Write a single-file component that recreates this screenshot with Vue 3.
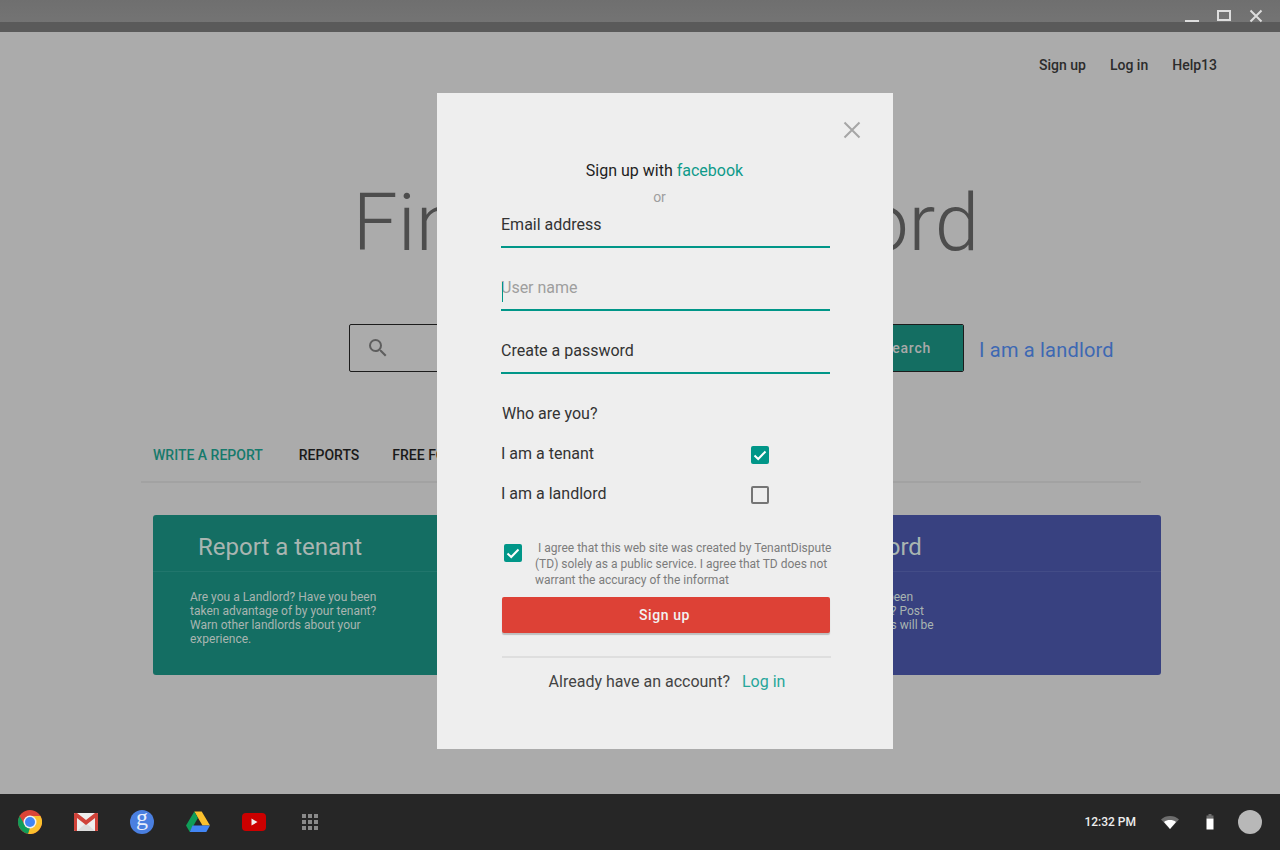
<script setup>
const shelfApps = ['chrome', 'gmail', 'google', 'drive', 'youtube', 'launcher']
const dots = [0, 1, 2].flatMap(y => [0, 1, 2].map(x => ({ x: 4 + x * 6, y: 4 + y * 6 })))
</script>

<template>
  <div class="screen">
    <div class="titlebar">
      <div class="window-controls">
        <svg width="16" height="16" viewBox="0 0 16 16"><rect x="1" y="12" width="14" height="2" fill="#ddd" /></svg>
        <svg width="16" height="16" viewBox="0 0 16 16"><rect x="2" y="3" width="12" height="9" fill="none" stroke="#ddd" stroke-width="2" /></svg>
        <svg width="16" height="16" viewBox="0 0 16 16"><path d="M2.500 2.500l11 11M13.500 2.500l-11 11" stroke="#ddd" stroke-width="2" /></svg>
      </div>
    </div>

    <main class="page">
      <nav class="top-nav">
        <a>Sign up</a>
        <a>Log in</a>
        <a>Help13</a>
      </nav>

      <h1 class="headline">Find your landlord</h1>

      <div class="search-row">
        <div class="search-box">
          <svg width="24" height="24" viewBox="0 0 24 24" fill="#5e5e5e">
            <path d="M15.500 14h-.79l-.28-.27A6.470 6.470 0 0 0 16 9.500 6.500 6.500 0 1 0 9.500 16c1.610 0 3.090-.59 4.230-1.570l.27.28v.79l5 4.990L20.490 19l-4.990-5zm-6 0C7.010 14 5 11.990 5 9.500S7.010 5 9.500 5 14 7.010 14 9.500 11.990 14 9.500 14z" />
          </svg>
          <button class="search-button">Search</button>
        </div>
        <a class="landlord-link">I am a landlord</a>
      </div>

      <div class="tabs">
        <a class="active">WRITE A REPORT</a>
        <a>REPORTS</a>
        <a>FREE FORMS</a>
      </div>

      <div class="cards">
        <section class="card card-tenant">
          <h2>Report a tenant</h2>
          <p>Are you a Landlord? Have you been taken advantage of by your tenant? Warn other landlords about your experience.</p>
        </section>
        <section class="card card-landlord">
          <h2>Report a landlord</h2>
          <p>Are you a Resident? Have you been<br />taken advantage of by landlord? Post<br />your story here. Your comments will be<br />public.</p>
        </section>
      </div>
    </main>

    <footer class="shelf">
      <div class="shelf-apps">
        <template v-for="app in shelfApps" :key="app">
          <svg v-if="app === 'chrome'" width="24" height="24" viewBox="0 0 24 24">
            <circle cx="12" cy="12" r="12" fill="#db4437" />
            <path d="M12 6h10.400A12 12 0 0 1 10 23.800L12 12z" fill="#fbc02d" />
            <path d="M1.600 6l5.200 9L12 18l-2 5.800A12 12 0 0 1 1.600 6z" fill="#0f9d58" />
            <circle cx="12" cy="12" r="6.500" fill="#f1f1f1" />
            <circle cx="12" cy="12" r="5" fill="#4285f4" />
          </svg>
          <svg v-else-if="app === 'gmail'" width="24" height="24" viewBox="0 0 24 24">
            <rect y="3" width="24" height="18" rx="1" fill="#eeeeee" />
            <path d="M3 21l9-8 9 8z" fill="#dcdcdc" />
            <path d="M0 4a1 1 0 0 1 1-1h2l9 7 9-7h2a1 1 0 0 1 1 1v16a1 1 0 0 1-1 1h-2V8l-9 7-9-7v13H1a1 1 0 0 1-1-1z" fill="#d0433a" />
          </svg>
          <svg v-else-if="app === 'google'" width="24" height="24" viewBox="0 0 24 24">
            <circle cx="12" cy="12" r="12" fill="#4a7fe0" />
            <text x="12" y="15" text-anchor="middle" class="g-letter">g</text>
          </svg>
          <svg v-else-if="app === 'drive'" width="24" height="24" viewBox="0 0 24 24">
            <path d="M8.300 1.500h7.400L24 15.500h-7.500z" fill="#fbc02d" />
            <path d="M8.300 1.500L0 15.500 3.800 22l8.100-14z" fill="#0f9d58" />
            <path d="M6.500 15.500H24L20.300 22H3.800z" fill="#4285f4" />
          </svg>
          <svg v-else-if="app === 'youtube'" width="24" height="24" viewBox="0 0 24 24">
            <rect y="3" width="24" height="18" rx="4" fill="#cc0000" />
            <path d="M9.500 8.500l6 3.500-6 3.500z" fill="#eee" />
          </svg>
          <svg v-else width="24" height="24" viewBox="0 0 24 24">
            <rect v-for="d in dots" :key="d.x + '-' + d.y" :x="d.x" :y="d.y" width="4" height="4" fill="#8a8a8a" />
          </svg>
        </template>
      </div>
      <div class="tray">
        <span class="clock">12:32 PM</span>
        <svg width="18" height="14" viewBox="0 0 18 14">
          <path d="M0 4.500C2.500 2 5.500 1 9 1s6.500 1 9 3.500L9 14z" fill="#6d6d6d" />
          <path d="M3 7c1.700-1.400 3.700-2 6-2s4.300.6 6 2l-6 7z" fill="#fff" />
        </svg>
        <svg width="8" height="16" viewBox="0 0 8 16">
          <rect x="2.500" y="0" width="3" height="2" fill="#6d6d6d" />
          <rect x="0.500" y="1.500" width="7" height="3" fill="#6d6d6d" />
          <rect x="0.500" y="4.500" width="7" height="11" fill="#fff" />
        </svg>
        <span class="avatar"></span>
      </div>
    </footer>

    <!-- the sign up dialog lies over the page -->
    <div class="modal">
      <svg class="modal-close" width="20" height="20" viewBox="0 0 20 20">
        <path d="M2.500 2.500l15 15M17.500 2.500l-15 15" stroke="#a6a6a6" stroke-width="2" fill="none" />
      </svg>

      <p class="social">Sign up with <a>facebook</a></p>
      <p class="or">or</p>

      <div class="field filled">Email address</div>
      <div class="field placeholder"><i class="caret"></i>User name</div>
      <div class="field filled">Create a password</div>

      <p class="who">Who are you?</p>

      <div class="role">
        <span>I am a tenant</span>
        <span class="check checked">
          <svg width="18" height="18" viewBox="0 0 18 18"><path d="M3.500 9.500l3.700 3.500 7.300-7.500" fill="none" stroke="#fff" stroke-width="2" /></svg>
        </span>
      </div>
      <div class="role">
        <span>I am a landlord</span>
        <span class="check"></span>
      </div>

      <div class="agree">
        <span class="check checked">
          <svg width="18" height="18" viewBox="0 0 18 18"><path d="M3.500 9.500l3.700 3.500 7.300-7.500" fill="none" stroke="#fff" stroke-width="2" /></svg>
        </span>
        <p>&nbsp;I agree that this web site was created by TenantDispute (TD) solely as a public service. I agree that TD does not warrant the accuracy of the informat</p>
      </div>

      <button class="signup">Sign up</button>

      <p class="login-line">Already have an account? <a>Log in</a></p>
    </div>
  </div>
</template>

<style scoped>
  .screen {
    position: relative;
    width: 1280px;
    height: 850px;
    overflow: hidden;
    display: flex;
    flex-direction: column;
    font-family: Roboto, 'Liberation Sans', sans-serif;
    background: #ababab;
  }

  .titlebar {
    height: 32px;
    flex: none;
    background: linear-gradient(#5a5a5a, #5a5a5a) 0 22px / 100% 10px no-repeat, linear-gradient(#6f6f6f, #767676);
  }

  .window-controls {
    display: flex;
    justify-content: flex-end;
    gap: 16px;
    padding: 8px 16px 0 0;
  }

  .page {
    flex: 1;
    min-height: 0;
    padding: 0 119px 0 141px;
  }

  .top-nav {
    display: flex;
    justify-content: flex-end;
    gap: 24px;
    padding-top: 25px;
    margin-right: -56px;
    font-size: 14px;
    font-weight: 500;
    line-height: 16px;
    color: #2c2c2c;
  }

  .headline {
    margin: 101px 0 0 30px;
    font-size: 80px;
    font-weight: 300;
    line-height: 98px;
    text-align: center;
    color: #4d4d4d;
  }

  .search-row {
    display: flex;
    align-items: center;
    margin-top: 52px;
    padding-left: 208px;
  }

  .search-box {
    width: 615px;
    height: 48px;
    box-sizing: border-box;
    display: flex;
    align-items: center;
    justify-content: space-between;
    border: 1px solid #1c1c1c;
    border-radius: 2px;
    padding-left: 16px;
  }

  .search-button {
    width: 130px;
    height: 46px;
    padding-left: 24px;
    border: 0;
    border-radius: 0 1px 1px 0;
    background: #146e62;
    color: #a9a9a9;
    font: 500 14px/16px Roboto, sans-serif;
    letter-spacing: 0.8px;
  }

  .landlord-link {
    margin-left: 15px;
    padding-top: 4px;
    font-size: 20px;
    letter-spacing: 0.2px;
    color: #3d68b3;
  }

  .tabs {
    display: flex;
    gap: 33px;
    height: 54px;
    margin-top: 57px;
    box-sizing: border-box;
    padding: 18px 0 0 12px;
    border-bottom: 2px solid #a2a2a2;
    margin-right: 20px;
    font-size: 14px;
    font-weight: 500;
    line-height: 16px;
    color: #1a1a1a;
  }

  .tabs .active {
    color: #167a6c;
    margin-right: 3px;
  }

  .cards {
    display: grid;
    grid-template-columns: 467px 467px;
    justify-content: space-between;
    margin: 32px 0 0 12px;
  }

  .card {
    height: 160px;
    border-radius: 3px;
    color: #a9b5b1;
  }

  .card h2 {
    margin: 0;
    height: 57px;
    box-sizing: border-box;
    padding: 16px 0 0 45px;
    border-bottom: 1px solid rgba(255, 255, 255, 0.06);
    font-size: 24px;
    font-weight: 400;
    line-height: 32px;
  }

  .card p {
    margin: 0;
    padding: 18px 0 0 37px;
    width: 200px;
    font-size: 12px;
    line-height: 14px;
  }

  .card-tenant {
    background: #146e63;
  }

  .card-landlord {
    background: #384180;
  }

  .card-landlord p {
    width: 230px;
    padding-left: 33px;
  }

  .shelf {
    height: 56px;
    flex: none;
    display: flex;
    align-items: center;
    justify-content: space-between;
    padding: 0 18px;
    background: #262626;
  }

  .shelf-apps {
    display: flex;
    gap: 32px;
  }

  .g-letter {
    font-family: 'Liberation Serif', serif;
    font-size: 24px;
    fill: #e8eefb;
  }

  .tray {
    display: flex;
    align-items: center;
  }

  .clock {
    font-size: 12px;
    font-weight: 500;
    color: #eee;
    margin-right: 25px;
  }

  .tray svg + svg {
    margin: 0 24px 0 27px;
  }

  .avatar {
    width: 24px;
    height: 24px;
    border-radius: 50%;
    background: #b8b8b8;
  }

  .modal {
    position: absolute;
    left: 437px;
    top: 93px;
    width: 456px;
    height: 656px;
    box-sizing: border-box;
    padding: 68px 63px 0 64px;
    background: #eeeeee;
    color: #333;
    font-size: 16px;
  }

  .modal p {
    margin: 0;
  }

  .modal-close {
    position: absolute;
    top: 27px;
    right: 31px;
  }

  .social {
    padding-right: 2px;
    line-height: 19px;
    text-align: center;
    color: #1e1e1e;
  }

  .social a {
    color: #0e9a8a;
  }

  .modal .or {
    margin: 9px 0 2px -12px;
    font-size: 14px;
    line-height: 16px;
    text-align: center;
    color: #9e9e9e;
  }

  .field {
    position: relative;
    height: 41px;
    box-sizing: border-box;
    padding-top: 8px;
    line-height: 19px;
    border-bottom: 2px solid #009688;
    margin-bottom: 22px;
  }

  .field.filled {
    color: #333;
  }

  .field.placeholder {
    color: #9e9e9e;
  }

  .caret {
    position: absolute;
    left: 1px;
    top: 12px;
    width: 1px;
    height: 20px;
    background: #009688;
  }

  .modal .who {
    margin: 30px 0 0 1px;
    line-height: 19px;
  }

  .role {
    display: flex;
    align-items: center;
    justify-content: space-between;
    height: 20px;
    margin-top: 20px;
    padding-right: 61px;
  }

  .role .check {
    margin-top: 4px;
  }

  .check {
    width: 18px;
    height: 18px;
    flex: none;
    box-sizing: border-box;
    border: 2px solid #757575;
    border-radius: 2px;
  }

  .check.checked {
    border: 0;
    background: #009688;
  }

  .check svg {
    display: block;
  }

  .agree {
    display: flex;
    gap: 13px;
    margin: 37px 0 0 3px;
    font-size: 12px;
    line-height: 16px;
    color: #7c7c7c;
  }

  .agree p {
    margin-right: -4px;
  }

  .agree .check {
    margin-top: 4px;
  }

  .signup {
    display: block;
    width: 328px;
    height: 36px;
    margin: 9px 0 0 1px;
    padding-right: 9px;
    border: 0;
    border-radius: 2px;
    background: #dd4136;
    box-shadow: 0 2px 1px rgba(0, 0, 0, 0.2);
    color: #f2f2f2;
    font: 500 14px/16px Roboto, sans-serif;
    letter-spacing: 0.6px;
  }

  .modal .login-line {
    width: 329px;
    margin: 23px 0 0 1px;
    padding: 14px 0 0 1px;
    box-sizing: border-box;
    border-top: 2px solid #dedede;
    line-height: 19px;
    text-align: center;
    color: #444;
  }

  .login-line a {
    margin-left: 8px;
    color: #26a69a;
  }
</style>

<style>
  body {
    background: #ababab;
  }
</style>
